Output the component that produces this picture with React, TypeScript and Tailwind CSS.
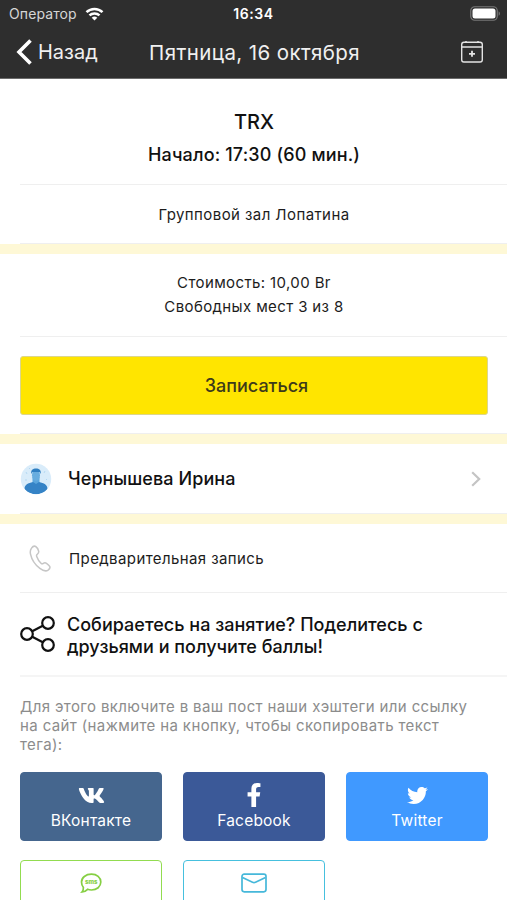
import type { ReactNode } from "react";
import { FaFacebookF, FaTwitter, FaVk } from "react-icons/fa";

const StatusBar = () => (
    <div className="grid h-[27px] grid-cols-3 items-center px-[9px]">
        <div className="flex items-center gap-[8px]">
            <span className="text-[14px] tracking-[0.1px] text-[#d6d6d6]">Оператор</span>
            <svg width="19" height="14" viewBox="0 0 18 14" fill="none" stroke="#fff" strokeWidth="2.5">
                <path d="M1 5.2a11.4 11.4 0 0 1 16 0" />
                <path d="M4 8.4a7.2 7.2 0 0 1 10 0" />
                <path d="M9 13.6 6.2 10.8a4 4 0 0 1 5.6 0Z" fill="#fff" stroke="none" />
            </svg>
        </div>
        <span className="text-center text-[14px] font-semibold tracking-[0.6px] text-white">16:34</span>
        <svg className="-mr-[3px] justify-self-end" width="31" height="15" viewBox="0 0 31 15">
            <rect x="0.75" y="0.75" width="26.5" height="13.5" rx="4" fill="none" stroke="#777" strokeWidth="1.2" />
            <rect x="2.5" y="2.5" width="23" height="10" rx="2.5" fill="#fff" />
            <path d="M28.6 5.2v4.6c1.8-.8 1.8-3.8 0-4.6Z" fill="#777" />
        </svg>
    </div>
);

const Header = () => (
    <header className="h-[79px] border-b border-[#6b6b6b] bg-[#2e2e2e]">
        <StatusBar />
        <div className="flex h-[50px] items-center justify-between pr-[23px] pl-[16px] text-[20px] text-[#f0f0f0]">
            <button className="flex w-[120px] items-center gap-[6px]">
                <svg width="16" height="26" viewBox="0 0 16 26" fill="none" stroke="#fff" strokeWidth="3.6">
                    <path d="M14.5 1.5 3 13l11.5 11.5" />
                </svg>
                <span>Назад</span>
            </button>
            <h1 className="ml-[9px] pt-[2px] text-[20.5px] tracking-[0.4px] whitespace-nowrap">Пятница, 16 октября</h1>
            <div className="flex w-[120px] justify-end">
                <svg width="24" height="24" viewBox="0 0 24 24" fill="none" stroke="#e4e4e4" strokeWidth="1.4">
                    <rect x="1.7" y="2.2" width="20.6" height="19.8" rx="2.2" />
                    <path d="M2 7h20M6 1v1.5M18 1v1.5" />
                    <path d="M12 10.8v6M9 13.8h6" strokeWidth="1.8" />
                </svg>
            </div>
        </div>
    </header>
);

const Divider = () => <div className="ml-5 h-px bg-[#efefef]" />;

const Band = () => <div className="h-[10px] bg-[#fef8d6]" />;

const Avatar = () => (
    <svg width="32" height="32" viewBox="0 0 32 32">
        <clipPath id="avatar">
            <circle cx="16" cy="16" r="15.2" />
        </clipPath>
        <g clipPath="url(#avatar)">
            <rect width="32" height="32" fill="#d9ecfa" />
            <path d="M6 9l1 2M25 8l-1 2M5 17h2M26 16l1 1M9 5l1 1" stroke="#b4d8f2" />
            <path d="M12.500 14h7v8h-7z" fill="#5aa5dc" />
            <ellipse cx="16" cy="12.2" rx="4" ry="5.6" fill="#68addf" />
            <path d="M11.4 11c-1-4 1.6-5.6 4.6-5.6s5.600 1.600 4.600 5.600l-1-2h-7.200Z" fill="#2f7fc2" />
            <path d="M4.500 26c0-4.500 3.500-6 8.500-7.100l3 2.100 3-2.100c5 1.100 8.500 2.600 8.500 7.100-3 4-7 5.200-11.500 5.200S7.500 30 4.500 26Z" fill="#3583c6" />
        </g>
    </svg>
);

const PhoneIcon = () => (
    <svg width="22" height="27" viewBox="0 0 22 27" fill="none" stroke="#c6c6c6" strokeWidth="1.5" strokeLinejoin="round">
        <path d="M2.5 3.200C3.600 1.600 5.500.8 6.700 1.500c1.500.9 2.600 3 3 4.900.2 1.300-.3 2-1.300 2.700-.9.600-1.100 1.200-.7 2.300.8 2.300 2.400 4.900 4.300 6.800.8.800 1.500.8 2.300.2 1.100-.8 2-.9 3.200-.1 1.400.9 2.600 2 3.200 3.100.7 1.400-.1 2.600-1.600 3.700-2.200 1.500-5.200.600-8.200-1.700C6.600 20.200 2.700 14.400 1.500 9.100 1 6.800 1.200 4.900 2.500 3.200Z" />
    </svg>
);

const ShareIcon = () => (
    <svg width="35" height="36" viewBox="0 0 35 36" fill="none" stroke="#111" strokeWidth="2.2">
        <circle cx="7" cy="18" r="5.8" />
        <circle cx="28" cy="7" r="5.8" />
        <circle cx="28" cy="29" r="5.8" />
        <path d="m12.200 15.300 10.600-5.600M12.200 20.700l10.600 5.600" />
    </svg>
);

const SmsIcon = () => (
    <svg width="22" height="21" viewBox="0 0 22 21">
        <path
            d="M11.500 1.200c5.300 0 9.300 3.400 9.300 7.900s-4 7.900-9.300 7.900c-1.500 0-2.700-.2-3.900-.7-1.500 1.600-3.400 2.500-5.600 2.700 1-1.200 1.500-2.700 1.400-4.500C2.300 13.100 1.500 11.200 1.500 9.100c0-4.500 4.200-7.900 10-7.900Z"
            fill="none"
            stroke="#86cf43"
            strokeWidth="1.7"
        />
        <text x="11.200" y="11" textAnchor="middle" fontSize="6" fontWeight="800" fill="#86cf43">sms</text>
    </svg>
);

const MailIcon = () => (
    <svg width="26" height="20" viewBox="0 0 26 20" fill="none" stroke="#46b8da" strokeWidth="1.7">
        <rect x="1" y="1.2" width="24" height="17.6" rx="2.2" />
        <path d="m1.500 4.500 10 4.700q1.500.7 3 0l10-4.700" />
    </svg>
);

interface ShareButtonProps {
    icon: ReactNode;
    label?: string;
    className: string;
}

const ShareButton = ({ icon, label, className }: ShareButtonProps) => (
    <button className={`flex h-[69px] flex-col items-center rounded-[4px] border-[1.5px] pt-[11px] ${className}`}>
        <span className="flex h-[22px] items-center justify-center">{icon}</span>
        {label && <span className="mt-[5px] text-[15.5px] leading-[20px] tracking-[0.2px]">{label}</span>}
    </button>
);

const App = () => {
    return (
        <div className="h-[900px] w-[507px] overflow-hidden bg-white font-['Inter','Liberation_Sans',sans-serif] text-[#1c1c1c]">
            <Header />

            <main>
                <section className="h-[105px] pt-[29px] pl-px text-center font-medium text-[#111]">
                    <h2 className="text-[20px] leading-[28px]">TRX</h2>
                    <p className="mt-[6px] text-[18px] leading-[26px] tracking-[0.15px]">Начало: 17:30 (60 мин.)</p>
                </section>
                <Divider />
                <p className="flex h-[58px] items-center justify-center pt-[2px] pl-px text-[15px] tracking-[0.42px]">Групповой зал Лопатина</p>
                <Divider />
                <Band />

                <section className="flex h-[82px] flex-col justify-center pl-px text-center text-[15px] leading-6 tracking-[0.38px]">
                    <p>Стоимость: 10,00 Br</p>
                    <p>Свободных мест 3 из 8</p>
                </section>
                <Divider />
                <div className="h-[96px] pt-[19px] pr-[19px] pl-5">
                    <button className="h-[59px] w-full rounded-[3px] border border-[#dcd68c] bg-[#ffe500] pl-[5px] text-[18px] font-medium text-[#3d3a1a]">
                        Записаться
                    </button>
                </div>
                <Divider />
                <Band />

                <div className="flex h-[69px] items-center pr-[26px] pl-5">
                    <Avatar />
                    <span className="ml-4 grow text-[18px] font-medium tracking-[0.08px] text-[#111]">Чернышева Ирина</span>
                    <svg width="10" height="16" viewBox="0 0 10 16" fill="none" stroke="#c4c4c4" strokeWidth="2.2">
                        <path d="m1.200 1.200 7 6.800-7 6.800" />
                    </svg>
                </div>
                <Divider />
                <Band />

                <div className="flex h-[68px] items-center pl-[29px]">
                    <PhoneIcon />
                    <span className="ml-[18px] pt-[2px] text-[15px] tracking-[0.4px]">Предварительная запись</span>
                </div>
                <Divider />
                <div className="flex h-[82px] items-center gap-3 pl-5">
                    <ShareIcon />
                    <p className="pt-[3px] text-[18px] leading-[22px] font-medium tracking-[0.02px] text-[#111]">
                        Собираетесь на занятие? Поделитесь с<br />
                        друзьями и получите баллы!
                    </p>
                </div>
                <div className="ml-5 h-[2px] bg-[#f5f5f5]" />

                <section className="pt-5 pr-[19px] pl-5">
                    <p className="text-[15px] leading-[19px] tracking-[0.38px] text-[#8c8c8c]">
                        Для этого включите в ваш пост наши хэштеги или ссылку<br />
                        на сайт (нажмите на кнопку, чтобы скопировать текст<br />
                        тега):
                    </p>
                    <div className="mt-[18px] grid grid-cols-3 gap-x-[21px] gap-y-[19px]">
                        <ShareButton
                            icon={<FaVk size={27} />}
                            label="ВКонтакте"
                            className="border-[#45668e] bg-[#45668e] text-white"
                        />
                        <ShareButton
                            icon={<FaFacebookF size={24} />}
                            label="Facebook"
                            className="border-[#3b5998] bg-[#3b5998] text-white"
                        />
                        <ShareButton
                            icon={<FaTwitter size={21} />}
                            label="Twitter"
                            className="border-[#4099ff] bg-[#4099ff] text-white"
                        />
                        <ShareButton icon={<SmsIcon />} className="border-[#92dc50]" />
                        <ShareButton icon={<MailIcon />} className="border-[#46c0de]" />
                    </div>
                </section>
            </main>
        </div>
    );
};

export default App;
